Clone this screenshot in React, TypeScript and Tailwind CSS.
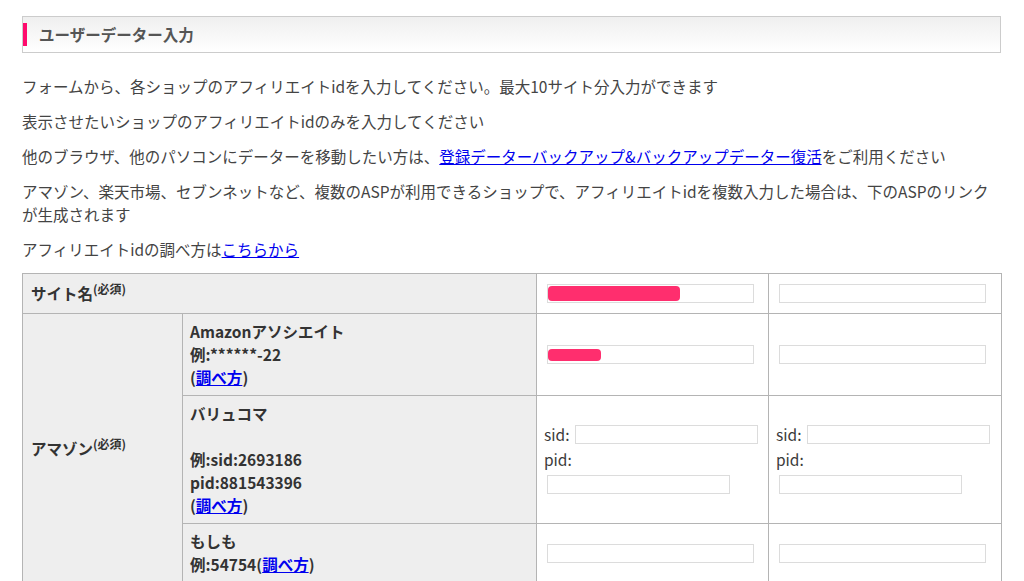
import React from 'react';

const cellHead = 'border border-[#b4b4b4] bg-[#eeeeee] px-[7px] py-[6px] align-middle font-bold text-[#333] leading-[23px]';
const cellInput = 'border border-[#b4b4b4] bg-white px-[7px] py-[6px] align-middle';

function Field({ redact, redactTop = 2, redactH = 15 }: { redact?: number; redactTop?: number; redactH?: number }) {
  return (
    <div className="relative ml-[3px] w-[207px]">
      <input type="text" className="block h-[19px] w-[207px] border border-[#dcdcdc] bg-white outline-none" />
      {redact && (
        <span
          className="absolute left-px rounded-[4px] bg-[#ff2e6e]"
          style={{ width: redact, top: redactTop, height: redactH }}
        />
      )}
    </div>
  );
}

function SidPid() {
  return (
    <div className="text-[#3a3a3a]">
      <div className="flex h-[19px] items-center">
        <span>sid:</span>
        <input type="text" className="ml-[6px] block h-[19px] w-[183px] border border-[#dcdcdc] bg-white outline-none" />
      </div>
      <div className="mt-[4px] leading-[23px]">pid:</div>
      <input type="text" className="mt-[4px] ml-[3px] block h-[19px] w-[183px] border border-[#dcdcdc] bg-white outline-none" />
    </div>
  );
}

const Req = () => <sup className="text-[12px] font-bold">(必須)</sup>;
const Howto = () => <a href="#" className="text-[#0000ee] underline">調べ方</a>;

export default function App() {
  const paragraphs = [
    <>フォームから、各ショップのアフィリエイトidを入力してください。最大10サイト分入力ができます</>,
    <>表示させたいショップのアフィリエイトidのみを入力してください</>,
    <>
      他のブラウザ、他のパソコンにデーターを移動したい方は、
      <a href="#" className="text-[#0000ee] underline">登録データーバックアップ&amp;バックアップデーター復活</a>
      をご利用ください
    </>,
    <>アマゾン、楽天市場、セブンネットなど、複数のASPが利用できるショップで、アフィリエイトidを複数入力した場合は、下のASPのリンクが生成されます</>,
    <>
      アフィリエイトidの調べ方は<a href="#" className="text-[#0000ee] underline">こちらから</a>
    </>,
  ];

  return (
    <div className="min-h-screen bg-white pt-4 pl-[22px] font-['Noto_Sans_CJK_JP',sans-serif] text-[15.5px] text-[#444]">
      <div className="w-[979px]">
        <h2 className="flex h-[37px] items-center border border-[#cccccc] bg-linear-to-b from-[#efefef] to-white">
          <span className="h-[23px] w-1 bg-[#ff0a6c]" />
          <span className="ml-3 font-bold text-[#555]">ユーザーデーター入力</span>
        </h2>

        <div className="mt-[22px]">
          {paragraphs.map((p, i) => (
            <p key={i} className="mb-[12px] leading-[23px]">{p}</p>
          ))}
        </div>

        <table className="w-[979px] table-fixed border-collapse">
          <colgroup>
            <col className="w-[160px]" />
            <col className="w-[354px]" />
            <col className="w-[232px]" />
            <col className="w-[233px]" />
          </colgroup>
          <tbody>
            <tr className="h-[40px]">
              <td colSpan={2} className={`${cellHead} pl-[8px]`}>サイト名<Req /></td>
              <td className={cellInput}><Field redact={132} redactTop={2} redactH={15} /></td>
              <td className={cellInput}><Field /></td>
            </tr>
            <tr>
              <td rowSpan={3} className={`${cellHead} pl-[8px]`}>アマゾン<Req /></td>
              <td className={cellHead}>
                Amazonアソシエイト<br />
                例:******-22<br />
                (<Howto />)
              </td>
              <td className={cellInput}><Field redact={53} redactTop={4} redactH={12} /></td>
              <td className={cellInput}><Field /></td>
            </tr>
            <tr>
              <td className={cellHead}>
                バリュコマ<br />
                <br />
                例:sid:2693186<br />
                pid:881543396<br />
                (<Howto />)
              </td>
              <td className={cellInput}><SidPid /></td>
              <td className={cellInput}><SidPid /></td>
            </tr>
            <tr>
              <td className={cellHead}>
                もしも<br />
                例:54754(<Howto />)
              </td>
              <td className={cellInput}><Field /></td>
              <td className={cellInput}><Field /></td>
            </tr>
          </tbody>
        </table>
      </div>
    </div>
  );
}
